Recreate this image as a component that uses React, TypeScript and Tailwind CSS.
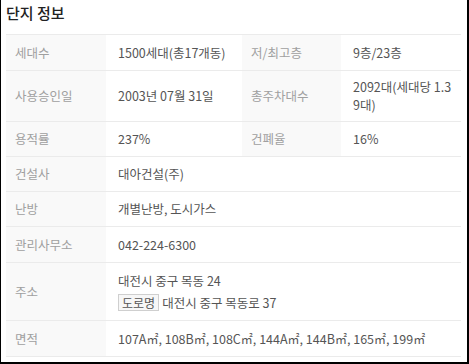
import React from 'react';

type Cell = { label: string; value: React.ReactNode };
type Row = { h: string; cells: Cell[] };

const areas = ['107A', '108B', '108C', '144A', '144B', '165', '199'];

const rows: Row[] = [
  {
    h: 'h-[36px]',
    cells: [
      { label: '세대수', value: '1500세대(총17개동)' },
      { label: '저/최고층', value: '9층/23층' },
    ],
  },
  {
    h: 'h-[51px]',
    cells: [
      { label: '사용승인일', value: '2003년 07월 31일' },
      { label: '총주차대수', value: '2092대(세대당 1.39대)' },
    ],
  },
  {
    h: 'h-[35px]',
    cells: [
      { label: '용적률', value: '237%' },
      { label: '건폐율', value: '16%' },
    ],
  },
  { h: 'h-[35px]', cells: [{ label: '건설사', value: '대아건설(주)' }] },
  { h: 'h-[35px]', cells: [{ label: '난방', value: '개별난방, 도시가스' }] },
  { h: 'h-[36px]', cells: [{ label: '관리사무소', value: '042-224-6300' }] },
  {
    h: 'h-[58px]',
    cells: [
      {
        label: '주소',
        value: (
          <div className="flex flex-col gap-[4px]">
            <span>대전시 중구 목동 24</span>
            <span className="flex items-center gap-[3px]">
              <span className="border border-[#cfcfcf] bg-[#f7f7f7] px-[3px] text-[12px] leading-[15px] text-[#555]">
                도로명
              </span>
              대전시 중구 목동로 37
            </span>
          </div>
        ),
      },
    ],
  },
  {
    h: 'h-[36px]',
    cells: [
      {
        label: '면적',
        value: (
          <span>
            {areas.map((a, i) => (
              <React.Fragment key={a}>
                {a}
                <span className="text-[12px]">㎡</span>
                {i < areas.length - 1 ? ', ' : ''}
              </React.Fragment>
            ))}
          </span>
        ),
      },
    ],
  },
];

function InfoRow({ row }: { row: Row }) {
  const single = row.cells.length === 1;
  return (
    <div className={`flex border-b border-[#ebebeb] ${row.h}`}>
      {row.cells.map((c, idx) => (
        <React.Fragment key={idx}>
          <div
            className={`flex items-center bg-[#f9f9f9] pl-[9px] text-[#a0a0a0] ${
              idx === 0 ? 'w-[100px]' : 'w-[99px]'
            }`}
          >
            {c.label}
          </div>
          <div
            className={`flex items-center break-all pl-[12px] pr-[4px] text-[#555] ${
              single ? 'flex-1' : idx === 0 ? 'w-[136px]' : 'w-[120px] pl-[11px]'
            }`}
          >
            {c.value}
          </div>
        </React.Fragment>
      ))}
    </div>
  );
}

export default function App() {
  return (
    <div
      className="h-[364px] w-[469px] border-b-2 border-l border-r-2 border-black bg-white pl-[5px]"
      style={{ fontFamily: '"Noto Sans CJK KR", "Noto Sans", sans-serif' }}
    >
      <div className="h-[34px] pt-[2px] text-[15px] font-medium leading-[22px] text-[#222]">
        단지 정보
      </div>
      <div className="w-[455px] border-t border-[#ebebeb] text-[12.5px] leading-[18px]">
        {rows.map((r, i) => (
          <InfoRow key={i} row={r} />
        ))}
      </div>
    </div>
  );
}
